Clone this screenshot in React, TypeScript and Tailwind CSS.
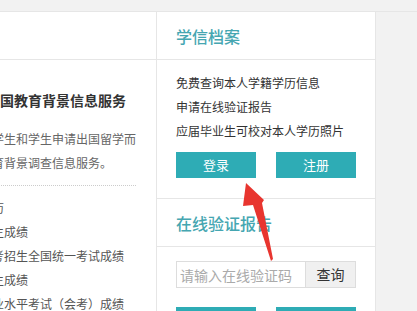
import React from "react";

const teal = "bg-[#2eacb5]";

const LeftPanel: React.FC = () => {
  const intro = ["学生和学生申请出国留学而", "育背景调查信息服务。"];
  const items = ["历", "生成绩", "考招生全国统一考试成绩", "生成绩", "业水平考试（会考）成绩"];

  return (
    <div className="w-[157px] shrink-0 overflow-hidden border-r border-[#e6e6e6] bg-white">
      <div className="h-[48px] border-b border-[#e6e6e6]" />
      <div className="pr-[20px] pt-[28px]">
        <h2 className="-ml-[14px] whitespace-nowrap text-[14px] font-bold leading-[24px] text-[#333]">
          出国教育背景信息服务
        </h2>
        <div className="-ml-[8px] mt-[15px] border-b border-dotted border-[#ccc] pb-[10px]">
          {intro.map((line) => (
            <p key={line} className="whitespace-nowrap text-[12px] leading-[24px] text-[#666]">
              {line}
            </p>
          ))}
        </div>
        <ul className="-ml-[8px] mt-[10px]">
          {items.map((item, i) => (
            <li key={i} className="whitespace-nowrap text-[12px] leading-[24px] text-[#555]">
              {item}
            </li>
          ))}
        </ul>
      </div>
    </div>
  );
};

const RightPanel: React.FC = () => {
  return (
    <div className="w-[219px] shrink-0 border-r border-[#e6e6e6] bg-white">
      <div className="flex h-[48px] items-center border-b border-[#e6e6e6] pl-[19px]">
        <h3 className="text-[16px] font-medium leading-none text-[#45a6b1]">学信档案</h3>
      </div>
      <div className="border-b border-[#e6e6e6] pb-[20px] pl-[19px] pt-[11px]">
        <p className="text-[12px] leading-[24px] text-[#333]">免费查询本人学籍学历信息</p>
        <p className="text-[12px] leading-[24px] text-[#333]">申请在线验证报告</p>
        <p className="text-[12px] leading-[24px] text-[#333]">应届毕业生可校对本人学历照片</p>
        <div className="mt-[9px] flex gap-[20px]">
          <button className={`h-[26px] w-[80px] ${teal} text-[13px] text-white`}>登录</button>
          <button className={`h-[26px] w-[80px] ${teal} text-[13px] text-white`}>注册</button>
        </div>
      </div>
      <div className="flex h-[48px] items-center border-b border-[#e6e6e6] pl-[19px]">
        <h3 className="text-[16px] font-medium leading-none text-[#45a6b1]">在线验证报告</h3>
      </div>
      <div className="pl-[19px] pt-[14px]">
        <div className="flex h-[27px]">
          <input
            placeholder="请输入在线验证码"
            className="h-[27px] w-[130px] border border-[#ddd] px-[3px] text-[14px] text-[#333] outline-none placeholder:text-[#aaa]"
          />
          <button className="h-[27px] w-[50px] border border-l-0 border-[#ddd] bg-[#f0f0f0] text-[14px] text-[#333]">
            查询
          </button>
        </div>
        <div className="mt-[19px] flex gap-[20px]">
          <button className={`h-[26px] w-[80px] ${teal} text-[13px] text-white`}>验证</button>
          <button className={`h-[26px] w-[80px] ${teal} text-[13px] text-white`}>说明</button>
        </div>
      </div>
    </div>
  );
};

export default function App() {
  return (
    <div className="relative h-[311px] w-[417px] overflow-hidden bg-[#f2f2f2] pt-[11px] font-['Noto_Sans_CJK_SC','Noto_Sans',sans-serif]">
      <div className="flex border-t border-[#e6e6e6]">
        <LeftPanel />
        <RightPanel />
      </div>
      <svg className="absolute left-0 top-0" width="417" height="311" viewBox="0 0 417 311">
        <polygon
          points="246,183 264,200 262,203 273,259 271,261 253,205 243,206"
          fill="#e8352f"
        />
      </svg>
    </div>
  );
}
